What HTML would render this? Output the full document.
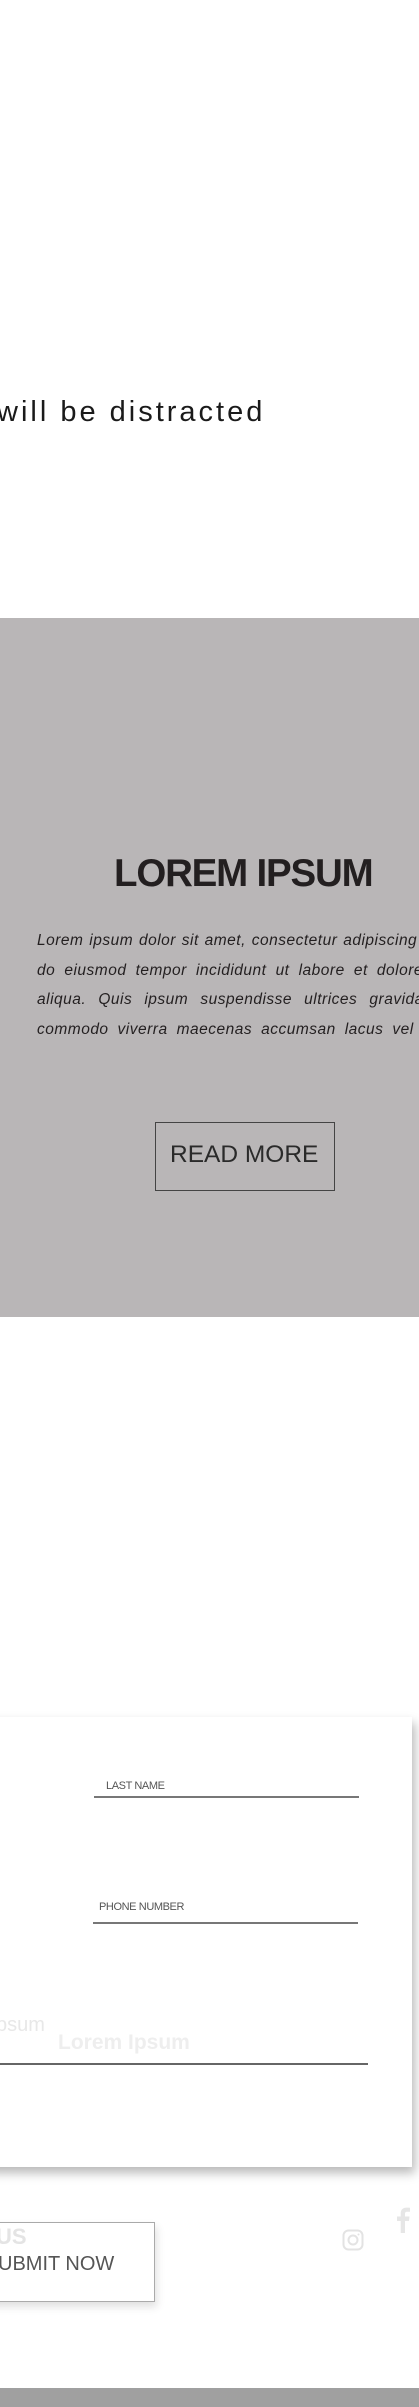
<!DOCTYPE html>
<html><head><meta charset="utf-8"><style>
*{margin:0;padding:0;box-sizing:border-box}
html,body{width:419px;height:2407px;overflow:hidden;background:#fff;position:relative;font-family:"Liberation Sans",sans-serif}
.a{position:absolute;white-space:nowrap}
.p{position:absolute;left:37px;width:445px;font-size:15.5px;font-style:italic;color:#231f20;text-align:justify;text-align-last:justify;white-space:nowrap;letter-spacing:0.5px}
</style></head><body>
<div class="a" style="left:-3px;top:396px;font-size:29px;letter-spacing:3px;color:#1a1a1a">will be distracted</div>
<div class="a" style="left:0;top:618px;width:419px;height:699px;background:#b9b6b7"></div>
<div class="a" style="left:114px;top:852px;font-size:38.5px;font-weight:bold;color:#231f20;letter-spacing:-1.2px">LOREM IPSUM</div>
<div class="p" style="top:932px">Lorem ipsum dolor sit amet, consectetur adipiscing elit, sed</div>
<div class="p" style="top:962px">do eiusmod tempor incididunt ut labore et dolore magna</div>
<div class="p" style="top:991px">aliqua. Quis ipsum suspendisse ultrices gravida. Risus</div>
<div class="p" style="top:1021px">commodo viverra maecenas accumsan lacus vel facilisis.</div>
<div class="a" style="left:155px;top:1122px;width:180px;height:69px;border:1.5px solid #444"></div>
<div class="a" style="left:170px;top:1141px;font-size:24.5px;color:#2a2a2a">READ MORE</div>
<div class="a" style="left:-20px;top:1717px;width:432px;height:450px;background:#fff;box-shadow:3px 6px 10px rgba(0,0,0,.28)"></div>
<div class="a" style="left:106px;top:1780px;font-size:11px;color:#555;letter-spacing:-0.4px">LAST NAME</div>
<div class="a" style="left:94px;top:1796px;width:265px;height:2px;background:#777"></div>
<div class="a" style="left:99px;top:1901px;font-size:11px;color:#555;letter-spacing:-0.4px">PHONE NUMBER</div>
<div class="a" style="left:93px;top:1922px;width:265px;height:2px;background:#777"></div>
<div class="a" style="left:-4px;top:2014px;font-size:20px;color:#e8e8e8">psum</div>
<div class="a" style="left:58px;top:2031px;font-size:21px;font-weight:bold;color:#eeeeee">Lorem Ipsum</div>
<div class="a" style="left:0;top:2063px;width:368px;height:2px;background:#666"></div>
<div class="a" style="left:-30px;top:2222px;width:185px;height:80px;border:1px solid #aaa;box-shadow:2px 5px 8px rgba(0,0,0,.12);background:#fff"></div>
<div class="a" style="left:-4px;top:2224px;font-size:22px;font-weight:bold;color:#e4e4e4">US</div>
<div class="a" style="left:-2px;top:2253px;font-size:20px;color:#555">UBMIT NOW</div>
<svg class="a" style="left:342px;top:2229px" width="22" height="22" viewBox="0 0 22 22"><rect x="1.5" y="1.5" width="19" height="19" rx="5" fill="none" stroke="#e3e3e3" stroke-width="2"/><circle cx="11" cy="11" r="4.5" fill="none" stroke="#e3e3e3" stroke-width="2"/><circle cx="16.5" cy="5.5" r="1" fill="#e3e3e3"/></svg>
<svg class="a" style="left:396px;top:2207px" width="14" height="26" viewBox="0 0 14 26"><path d="M9 26V14h4l.5-4.5H9V7c0-1.3.4-2.2 2.3-2.2H14V.8C13.5.7 12 .6 10.4.6 7 .6 4.7 2.6 4.7 6.4v3.1H1V14h3.7v12z" fill="#e6e6e6"/></svg>
<div class="a" style="left:0;top:2388px;width:419px;height:19px;background:#a0a0a0"></div>
</body></html>
